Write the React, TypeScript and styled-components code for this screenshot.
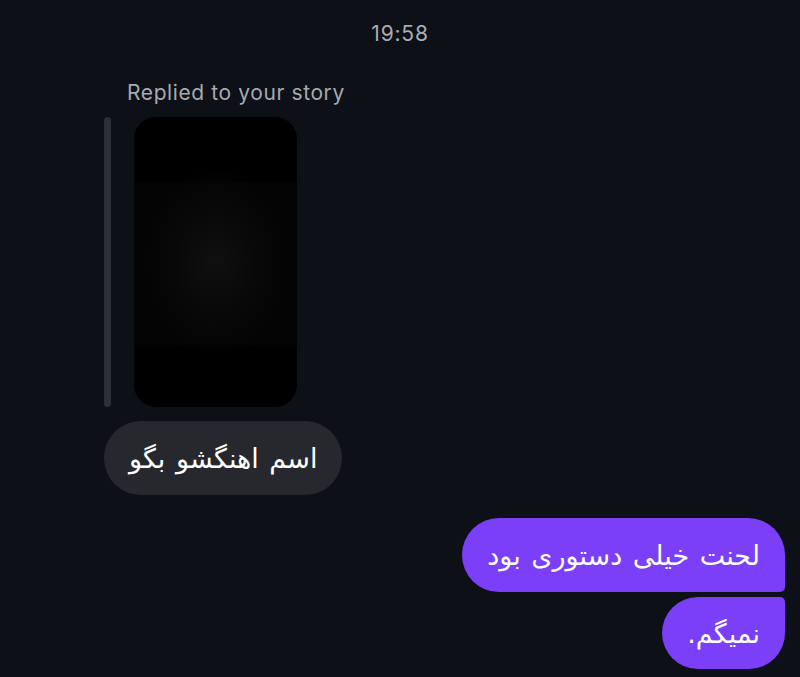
import styled, { createGlobalStyle } from 'styled-components';

const GlobalStyle = createGlobalStyle`
  html, body {
    margin: 0;
    padding: 0;
    background-color: #0d1016;
  }
  #root {
    min-height: 677px;
  }
`;

const Screen = styled.div`
  width: 800px;
  height: 677px;
  background-color: #0d1016;
  display: flex;
  flex-direction: column;
  overflow: hidden;
  font-family: Inter, Roboto, "Liberation Sans", sans-serif;
`;

const TimeStamp = styled.div`
  text-align: center;
  color: #a9adb4;
  font-size: 21px;
  line-height: 24px;
  letter-spacing: 0.8px;
  padding-top: 22px;
`;

const StoryReply = styled.div`
  display: flex;
  flex-direction: column;
  padding-left: 104px;
  margin-top: 35px;
`;

const ReplyLabel = styled.div`
  color: #a6aab1;
  font-size: 21px;
  line-height: 24px;
  padding-left: 23px;
  letter-spacing: 0.6px;
`;

const StoryRow = styled.div`
  display: flex;
  gap: 23px;
  margin-top: 12px;
`;

const QuoteBar = styled.div`
  width: 7px;
  height: 290px;
  border-radius: 4px;
  background-color: #2c2f35;
`;

const StoryThumb = styled.div`
  width: 163px;
  height: 290px;
  border-radius: 22px;
  background:
    radial-gradient(ellipse 75px 95px at 50% 50%, #101010 0%, #080808 55%, transparent 100%),
    linear-gradient(to bottom, #000 0%, #000 22%, #040404 23%, #040404 78%, #000 79%, #000 100%);
`;

const Messages = styled.div`
  display: flex;
  flex-direction: column;
  padding: 14px 15px 0 104px;
`;

const Bubble = styled.div<{ $mine?: boolean; $shape?: 'first' | 'last' | 'single' }>`
  align-self: ${p => (p.$mine ? 'flex-end' : 'flex-start')};
  direction: rtl;
  font-family: "DejaVu Sans", "Noto Sans", sans-serif;
  font-size: 27px;
  word-spacing: 2px;
  color: #ffffff;
  background-color: ${p => (p.$mine ? '#7a3ff6' : '#26282d')};
  padding: 0 25px;
  height: ${p => (p.$shape === 'last' ? '72px' : '74px')};
  display: flex;
  align-items: center;
  border-radius: ${p =>
    p.$shape === 'first'
      ? '37px 37px 5px 37px'
      : p.$shape === 'last'
      ? '37px 5px 37px 37px'
      : '37px'};
`;

const MineGroup = styled.div`
  display: flex;
  flex-direction: column;
  align-items: flex-end;
  gap: 5px;
  margin-top: 23px;
`;

export default function App() {
  return (
    <>
      <GlobalStyle />
      <Screen>
        <TimeStamp>19:58</TimeStamp>
        <StoryReply>
          <ReplyLabel>Replied to your story</ReplyLabel>
          <StoryRow>
            <QuoteBar />
            <StoryThumb />
          </StoryRow>
        </StoryReply>
        <Messages>
          <Bubble $shape="single">اسم اهنگشو بگو</Bubble>
          <MineGroup>
            <Bubble $mine $shape="first">لحنت خیلی دستوری بود</Bubble>
            <Bubble $mine $shape="last">نمیگم.</Bubble>
          </MineGroup>
        </Messages>
      </Screen>
    </>
  );
}
